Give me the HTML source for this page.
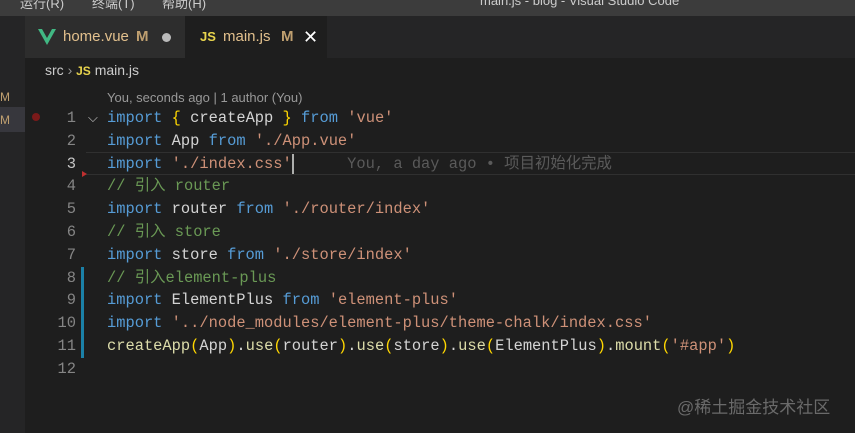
<!DOCTYPE html>
<html><head><meta charset="utf-8"><style>
*{margin:0;padding:0;box-sizing:border-box}
body{width:855px;height:433px;background:#1e1e1e;overflow:hidden;position:relative;font-family:"Liberation Sans","Noto Sans CJK SC",sans-serif}
.title{position:absolute;left:0;top:0;width:855px;height:16px;background:#3c3c3c;color:#ccc;font-size:13px;overflow:hidden}
.title span{position:absolute;top:-7px}
.tabs{position:absolute;left:0;top:16px;width:855px;height:42px;background:#252526}
.side{position:absolute;left:0;top:58px;width:25px;height:375px;background:#252526}
.tab{position:absolute;top:0;height:42px;font-size:15px;line-height:42px;color:#e2c08d}
.t1{left:25px;width:160px;background:#2d2d2d}
.t2{left:185px;width:142px;background:#1e1e1e}
.crumb{position:absolute;left:45px;top:62px;font-size:14px;color:#ccc}
.code{position:absolute;left:0;top:107px;font-family:"Liberation Mono","Noto Sans CJK SC",monospace;font-size:15.4px;line-height:22.8px;white-space:pre}
.ln{position:absolute;left:40px;width:36px;text-align:right;color:#858585}
.c{position:absolute;left:107px;top:0;color:#d4d4d4}
.k{color:#569cd6}.s{color:#ce9178}.cm{color:#6a9955}.f{color:#dcdcaa}.b{color:#ffd700}
</style></head><body>
<div class="title"><span style="left:20px">运行(R)</span><span style="left:92px">终端(T)</span><span style="left:162px">帮助(H)</span><span style="left:480px">main.js - blog - Visual Studio Code</span></div>
<div class="tabs">
 <div class="tab t1"><svg style="position:absolute;left:13px;top:13px" width="18" height="16" viewBox="0 0 18 16"><path d="M0 0h4l5 9 5-9h4L9 16z" fill="#41b883"/></svg><span style="position:absolute;left:38px">home.vue</span><span style="position:absolute;left:111px;font-weight:bold;color:#c0a070">M</span><span style="position:absolute;left:137px;top:17px;width:9px;height:9px;border-radius:50%;background:#bbb"></span></div>
 <div class="tab t2"><span style="position:absolute;left:15px;color:#e8d44d;font-weight:bold;font-size:13px">JS</span><span style="position:absolute;left:38px;color:#e2c08d">main.js</span><span style="position:absolute;left:96px;font-weight:bold;color:#c0a070">M</span><span style="position:absolute;left:118px;color:#fff;font-size:18px">✕</span></div>
</div>
<div class="side"><span style="position:absolute;left:0;top:32px;color:#c0a070;font-size:12px">M</span><div style="position:absolute;left:0;top:49px;width:25px;height:25px;background:#37373d"></div><span style="position:absolute;left:0;top:55px;color:#c0a070;font-size:12px">M</span></div>
<div class="crumb">src <span style="color:#999">›</span> <span style="color:#e8d44d;font-weight:bold;font-size:12px">JS</span> main.js</div>
<div style="position:absolute;left:107px;top:90px;font-size:13px;color:#999">You, seconds ago | 1 author (You)</div>
<div style="position:absolute;left:86px;top:152px;width:769px;height:23px;border-top:1px solid #303030;border-bottom:1px solid #303030"></div>
<div style="position:absolute;left:32px;top:113px;width:8px;height:8px;border-radius:50%;background:#7a1a1a"></div>
<div style="position:absolute;left:82px;top:171px;width:0;height:0;border-left:5px solid #c03030;border-top:3px solid transparent;border-bottom:3px solid transparent"></div>
<div style="position:absolute;left:81px;top:267px;width:3px;height:91px;background:#1b81a8"></div>
<div style="position:absolute;left:88px;top:110px;color:#c5c5c5;font-size:13px">⌵</div>
<div style="position:absolute;left:292px;top:154px;width:2px;height:20px;background:#aeafad"></div>
<div class="code"><div class="ln" style="top:0">1</div><div class="ln" style="top:22.8px">2</div><div class="ln" style="top:45.6px;color:#c6c6c6">3</div><div class="ln" style="top:68.4px">4</div><div class="ln" style="top:91.2px">5</div><div class="ln" style="top:114px">6</div><div class="ln" style="top:136.8px">7</div><div class="ln" style="top:159.6px">8</div><div class="ln" style="top:182.4px">9</div><div class="ln" style="top:205.2px">10</div><div class="ln" style="top:228px">11</div><div class="ln" style="top:250.8px">12</div><div class="c"><span class="k">import</span> <span class="b">{</span> createApp <span class="b">}</span> <span class="k">from</span> <span class="s">'vue'</span>
<span class="k">import</span> App <span class="k">from</span> <span class="s">'./App.vue'</span>
<span class="k">import</span> <span class="s">'./index.css'</span>      <span style="color:#5a5a5a">You, a day ago • 项目初始化完成</span>
<span class="cm">// 引入 router</span>
<span class="k">import</span> router <span class="k">from</span> <span class="s">'./router/index'</span>
<span class="cm">// 引入 store</span>
<span class="k">import</span> store <span class="k">from</span> <span class="s">'./store/index'</span>
<span class="cm">// 引入element-plus</span>
<span class="k">import</span> ElementPlus <span class="k">from</span> <span class="s">'element-plus'</span>
<span class="k">import</span> <span class="s">'../node_modules/element-plus/theme-chalk/index.css'</span>
<span class="f">createApp</span><span class="b">(</span>App<span class="b">)</span>.<span class="f">use</span><span class="b">(</span>router<span class="b">)</span>.<span class="f">use</span><span class="b">(</span>store<span class="b">)</span>.<span class="f">use</span><span class="b">(</span>ElementPlus<span class="b">)</span>.<span class="f">mount</span><span class="b">(</span><span class="s">'#app'</span><span class="b">)</span></div></div>
<div style="position:absolute;left:677px;top:393px;font-size:17px;color:#6a6a6a">@稀土掘金技术社区</div>
</body></html>
